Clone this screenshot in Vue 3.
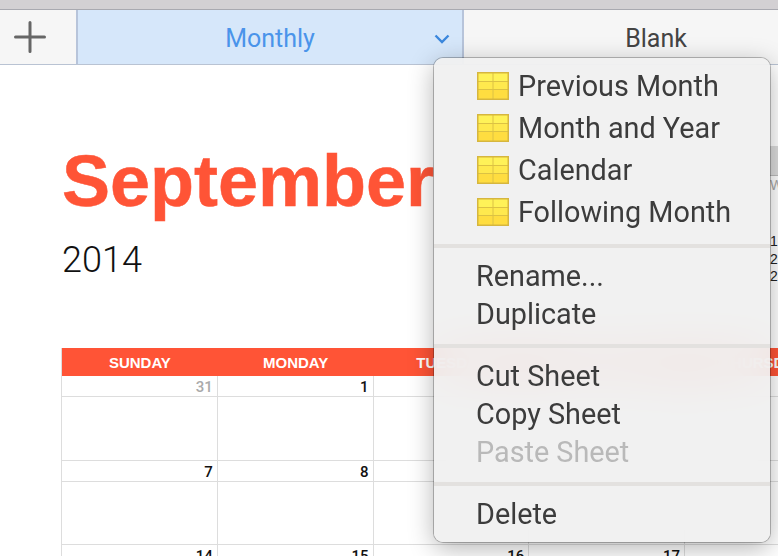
<script setup>
const dayNames = ['SUNDAY', 'MONDAY', 'TUESDAY', 'WEDNESDAY', 'THURSDAY']
const weeks = [
  [{ n: 31, muted: true }, { n: 1 }, { n: 2 }, { n: 3 }, { n: 4 }],
  [{ n: 7 }, { n: 8 }, { n: 9 }, { n: 10 }, { n: 11 }],
  [{ n: 14 }, { n: 15 }, { n: 16 }, { n: 17 }, { n: 18 }],
]
const tableItems = ['Previous Month', 'Month and Year', 'Calendar', 'Following Month']
const menuGroups = [
  [{ label: 'Rename...' }, { label: 'Duplicate' }],
  [{ label: 'Cut Sheet' }, { label: 'Copy Sheet' }, { label: 'Paste Sheet', disabled: true }],
  [{ label: 'Delete' }],
]
</script>

<template>
  <div class="app">
    <div class="titlebar"></div>
    <div class="tabs">
      <div class="add">
        <svg width="32" height="32" viewBox="0 0 32 32">
          <path d="M16 1.500V30.500M1.500 16H30.500" stroke="#666" stroke-width="3" stroke-linecap="round" fill="none" />
        </svg>
      </div>
      <div class="tab active">
        <span>Monthly</span>
        <svg class="chevron" width="16" height="10" viewBox="0 0 16 10">
          <path d="M1.500 1.500L8 8L14.500 1.500" stroke="#3b87dd" stroke-width="2.400" fill="none" />
        </svg>
      </div>
      <div class="tab">Blank</div>
    </div>

    <div class="sheet">
      <h1>September</h1>
      <p class="year">2014</p>

      <div class="calendar">
        <div class="head">
          <div v-for="name in dayNames" :key="name" class="head-cell">{{ name }}</div>
        </div>
        <div v-for="(week, i) in weeks" :key="i" class="week">
          <div v-for="day in week" :key="day.n" class="day">
            <div class="date" :class="{ muted: day.muted }">{{ day.n }}</div>
            <div class="space"></div>
          </div>
        </div>
      </div>

      <!-- second table, mostly hidden behind the menu -->
      <div class="side-table">
        <div class="side-head"></div>
        <div class="side-day">W</div>
        <div class="side-nums">
          <span>1</span>
          <span>2</span>
          <span>2</span>
        </div>
      </div>
    </div>

    <div class="menu">
      <div class="group tables">
        <div v-for="item in tableItems" :key="item" class="table-item">
          <svg width="32" height="28" viewBox="0 0 32 28">
            <rect x="1" y="1" width="30" height="9" fill="#fff258" />
            <rect x="1" y="10" width="30" height="8" fill="#ffe94e" />
            <rect x="1" y="18" width="30" height="9" fill="#ffdd40" />
            <path d="M16 1V27M1 9.500H31M1 17.500H31" stroke="#dcc244" stroke-width="1" fill="none" />
            <rect x="0.750" y="0.750" width="30.500" height="26.500" fill="none" stroke="#d6b63e" stroke-width="1.500" />
          </svg>
          <span>{{ item }}</span>
        </div>
      </div>
      <template v-for="(group, i) in menuGroups" :key="i">
        <div class="separator"></div>
        <div class="group">
          <div v-for="item in group" :key="item.label" class="item" :class="{ disabled: item.disabled }">
            {{ item.label }}
          </div>
        </div>
      </template>
    </div>
  </div>
</template>

<style scoped>
.app {
  position: relative;
  width: 778px;
  height: 556px;
  overflow: hidden;
  background: #fff;
  font-family: "Liberation Sans", Arial, sans-serif;
}

.titlebar {
  height: 9px;
  background: #d3d0d3;
  border-bottom: 1px solid #a9a9b0;
}

.tabs {
  display: flex;
  height: 54px;
  border-bottom: 1px solid #b9c3d3;
  background: #f6f6f6;
}

.add {
  width: 76px;
  flex: none;
  display: flex;
  align-items: center;
  padding-left: 14px;
  box-sizing: border-box;
}

.tab {
  position: relative;
  flex: none;
  width: 384px;
  padding-top: 3px;
  height: 51px;
  display: flex;
  align-items: center;
  justify-content: center;
  font-family: Roboto, sans-serif;
  font-size: 25px;
  color: #444;
}

.tab.active {
  background: #d6e7fa;
  color: #4a94ea;
  border-left: 2px solid #b7c4da;
  border-right: 2px solid #b7c4da;
}

.chevron {
  position: absolute;
  right: 12px;
  top: 24px;
}

.sheet {
  position: relative;
  padding: 0 0 0 62px;
}

h1 {
  margin: 0;
  padding-top: 73px;
  font-size: 72px;
  line-height: 86px;
  font-weight: 700;
  color: #ff5436;
  white-space: nowrap;
  -webkit-text-stroke: 0.5px #ff5436;
}

.year {
  margin: 0;
  padding-top: 15px;
  font-family: Roboto, sans-serif;
  font-weight: 300;
  font-size: 36px;
  line-height: 42px;
  color: #111;
}

.calendar {
  margin-top: 67px;
  width: max-content;
  border-left: 1px solid #ddd;
  margin-left: -1px;
}

.head {
  display: flex;
  height: 28px;
  background: #ff5436;
}

.head-cell {
  width: 155.750px;
  display: flex;
  align-items: center;
  justify-content: center;
  font-size: 15px;
  font-weight: 700;
  color: #fff;
}

.week {
  display: flex;
  height: 84.600px;
}

.day {
  width: 155.750px;
  box-sizing: border-box;
  border-right: 1px solid #ddd;
  border-bottom: 1px solid #ddd;
}

.date {
  height: 21px;
  box-sizing: border-box;
  padding-right: 4px;
  border-bottom: 1px solid #ddd;
  text-align: right;
  font-family: Roboto, sans-serif;
  font-weight: 500;
  font-size: 15px;
  line-height: 22px;
  color: #111;
}

.date.muted {
  color: #aaa;
}

.side-table {
  position: absolute;
  left: 770px;
  top: 81px;
  width: 40px;
  font-size: 14px;
}

.side-head {
  height: 29px;
  background: #dcdcdc;
  border-bottom: 1px solid #bbb;
}

.side-day {
  margin-top: 2px;
  height: 14px;
  line-height: 14px;
  color: #aaa;
}

.side-nums {
  margin-top: 41px;
  display: flex;
  flex-direction: column;
  line-height: 17.500px;
  color: #222;
}

.menu {
  position: absolute;
  left: 434px;
  top: 58px;
  width: 336px;
  height: 484px;
  box-sizing: border-box;
  padding-top: 7px;
  border-radius: 9px;
  background: rgba(240, 240, 240, 0.92);
  backdrop-filter: blur(24px);
  box-shadow: 0 0 0 1px rgba(0, 0, 0, 0.25), 0 6px 26px rgba(0, 0, 0, 0.3);
  font-family: Roboto, sans-serif;
  font-size: 28.800px;
  color: #3c3c3c;
}

.table-item {
  display: flex;
  align-items: center;
  gap: 9px;
  height: 42px;
  padding-left: 43px;
}

.separator {
  height: 4px;
  margin: 11px 0 9px;
  background: #e3e1df;
}

.item {
  height: 38px;
  line-height: 38px;
  padding-left: 42px;
}

.item.disabled {
  color: #b9b9b9;
}
</style>

<style>
html,
body {
  margin: 0;
  background: #fff;
}
</style>
